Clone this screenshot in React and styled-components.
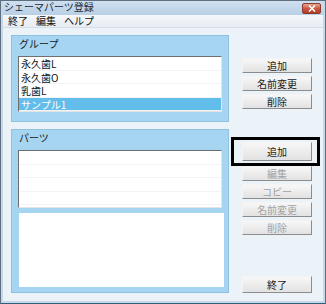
import React from 'react'
import styled, { createGlobalStyle } from 'styled-components'

const Global = createGlobalStyle`
  html, body { margin: 0; padding: 0; background: #eaf1f8; }
  body { font-family: "Noto Sans CJK JP", "Noto Sans", sans-serif; font-size: 10px; line-height: 1.2; }
`

const Win = styled.div`
  width: 326px;
  height: 304px;
  box-sizing: border-box;
  border: 1px solid #5f6f80;
  border-bottom-color: #2d5f78;
  background: #c6d8ea;
  padding: 0 2px 2px 2px;
  display: flex;
  flex-direction: column;
`

const TitleBar = styled.div`
  height: 14px;
  box-sizing: border-box;
  display: flex;
  align-items: center;
  justify-content: space-between;
  padding: 0 2px 2px 1px;
  background: linear-gradient(#cfe0f0, #b9cfe5);
  color: #1b2838;
  font-size: 10px;
  line-height: 12px;
`

const CloseBtn = styled.div`
  width: 19px;
  height: 11px;
  margin-top: 3px;
  border: 1px solid #8a3b2e;
  border-radius: 2px;
  box-sizing: border-box;
  background: linear-gradient(#e9a593, #c9513a 55%, #b43d28);
  display: flex;
  align-items: center;
  justify-content: center;
`

const MenuBar = styled.div`
  height: 13px;
  display: flex;
  align-items: center;
  gap: 8px;
  padding-left: 5px;
  background: linear-gradient(#f6f8fb, #e6ecf3);
  border-bottom: 1px solid #d5dde6;
  color: #111;
  font-size: 10px;
  line-height: 12px;
`

const Content = styled.div`
  flex: 1;
  background: #ebf2f8;
  display: flex;
  padding: 7px 11px 8px 8px;
`

const LeftCol = styled.div`
  width: 218px;
  display: flex;
  flex-direction: column;
  gap: 7px;
`

const Panel = styled.div`
  background: #a5d5f1;
  border: 1px solid #8fc2e0;
  padding: 0 6px 5px 6px;
  display: flex;
  flex-direction: column;
  height: ${p => p.$h}px;
  box-sizing: border-box;
`

const PanelLabel = styled.div`
  height: 20px;
  line-height: 16px;
  padding-left: 1px;
  color: #1a1a1a;
  font-size: 10px;
`

const ListBox = styled.div`
  background: #fff;
  border: 1px solid;
  border-color: #6e6e6e #e4e4e4 #e4e4e4 #6e6e6e;
  height: ${p => p.$h}px;
  box-sizing: border-box;
  overflow: hidden;
`

const Row = styled.div`
  height: 13.5px;
  line-height: 13px;
  padding-left: 2px;
  border-bottom: 1px solid #f1f3f5;
  box-sizing: border-box;
  color: ${p => (p.$sel ? '#fff' : '#111')};
  background: ${p => (p.$sel ? '#63bdea' : 'transparent')};
  font-size: 10px;
`

const WhiteArea = styled.div`
  flex: 1;
  margin-top: 5px;
  background: #fff;
  margin-right: -2px;
  margin-left: 1px;
`

const RightCol = styled.div`
  width: 70px;
  margin-left: 13px;
  display: flex;
  flex-direction: column;
`

const BtnGroup = styled.div`
  display: flex;
  flex-direction: column;
  gap: 3px;
  margin-top: ${p => p.$mt}px;
`

const Btn = styled.div`
  height: ${p => p.$h || 15}px;
  box-sizing: border-box;
  border: 1px solid;
  border-color: #f4f4f4 #8c8c8c #8c8c8c #f4f4f4;
  background: linear-gradient(#f7f7f7, #e2e2e2);
  color: ${p => (p.$off ? '#a3a3a3' : '#1a1a1a')};
  display: flex;
  align-items: center;
  justify-content: center;
  font-size: 10px;
  line-height: 12px;
`

const FocusWrap = styled.div`
  position: relative;
  margin-bottom: 2px;
`

const FocusFrame = styled.div`
  position: absolute;
  left: -11px;
  right: -8px;
  top: -5px;
  bottom: -5px;
  border: 3px solid #000;
`

const Spacer = styled.div`
  flex: 1;
`

export default function App() {
  return (
    <>
      <Global />
      <Win>
        <TitleBar>
          <span>シェーマパーツ登録</span>
          <CloseBtn>
            <svg width="8" height="7" viewBox="0 0 8 7">
              <path d="M1 0.5 L7 6.5 M7 0.5 L1 6.5" stroke="#fff" strokeWidth="1.6" />
            </svg>
          </CloseBtn>
        </TitleBar>
        <MenuBar>
          <span>終了</span>
          <span>編集</span>
          <span>ヘルプ</span>
        </MenuBar>
        <Content>
          <LeftCol>
            <Panel $h={87}>
              <PanelLabel>グループ</PanelLabel>
              <ListBox $h={56}>
                <Row>永久歯L</Row>
                <Row>永久歯O</Row>
                <Row>乳歯L</Row>
                <Row $sel>サンプル1</Row>
              </ListBox>
            </Panel>
            <Panel $h={164}>
              <PanelLabel>パーツ</PanelLabel>
              <ListBox $h={58}>
                <Row />
                <Row />
                <Row />
                <Row />
              </ListBox>
              <WhiteArea />
            </Panel>
          </LeftCol>
          <RightCol>
            <BtnGroup $mt={23}>
              <Btn>追加</Btn>
              <Btn>名前変更</Btn>
              <Btn>削除</Btn>
            </BtnGroup>
            <BtnGroup $mt={33}>
              <FocusWrap>
                <Btn $h={19}>追加</Btn>
                <FocusFrame />
              </FocusWrap>
              <Btn $off>編集</Btn>
              <Btn $off>コピー</Btn>
              <Btn $off>名前変更</Btn>
              <Btn $off>削除</Btn>
            </BtnGroup>
            <Spacer />
            <Btn $h={17}>終了</Btn>
          </RightCol>
        </Content>
      </Win>
    </>
  )
}
